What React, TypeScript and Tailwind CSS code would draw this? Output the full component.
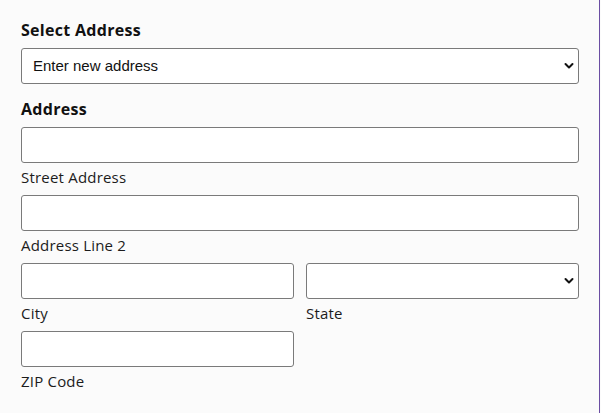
import { useState } from 'react'

const labelFont = { fontFamily: '"Open Sans", "Noto Sans", "DejaVu Sans", sans-serif' }

function Chevron() {
  return (
    <svg
      className="pointer-events-none absolute right-[5px] top-1/2 -translate-y-1/2"
      width="10"
      height="7"
      viewBox="0 0 10 7"
      fill="none"
    >
      <path d="M1.5 1.5 L5 5 L8.5 1.5" stroke="#111" strokeWidth="2" strokeLinecap="round" strokeLinejoin="round" />
    </svg>
  )
}

function SelectBox({ value, options }: { value: string; options: string[] }) {
  const [current, setCurrent] = useState(value)
  return (
    <div className="relative">
      <select
        value={current}
        onChange={(e) => setCurrent(e.target.value)}
        className="block h-[36px] w-full appearance-none rounded-[3px] border border-[#7a7a7a] bg-white pl-[11px] pr-8 text-[15px] text-[#111] outline-none"
        style={{ fontFamily: '"Liberation Sans", Arial, sans-serif' }}
      >
        {options.map((o) => (
          <option key={o} value={o}>
            {o}
          </option>
        ))}
      </select>
      <Chevron />
    </div>
  )
}

function Field({ label, children }: { label: string; children: React.ReactNode }) {
  return (
    <div className="mb-2">
      {children}
      <div className="mt-1 text-[15px] leading-[20px] tracking-[0.2px] text-[#1c1c1c]" style={labelFont}>
        {label}
      </div>
    </div>
  )
}

function TextBox() {
  return (
    <input
      type="text"
      className="block h-[36px] w-full rounded-[3px] border border-[#7a7a7a] bg-white px-2 text-[15px] outline-none"
    />
  )
}

export default function App() {
  return (
    <div className="flex min-h-[413px] bg-[#fbfbfb]">
      <div className="w-[600px] border-r border-[#6b4ea3] pl-[21px] pr-[20px] pt-[19px]">
        <h2 className="mb-[7px] text-[16px] font-bold leading-[22px] tracking-[0.3px] text-[#111]" style={labelFont}>
          Select Address
        </h2>
        <SelectBox value="Enter new address" options={['Enter new address']} />

        <h2 className="mb-[7px] mt-[14px] text-[16px] font-bold leading-[22px] tracking-[0.3px] text-[#111]" style={labelFont}>
          Address
        </h2>
        <Field label="Street Address">
          <TextBox />
        </Field>
        <Field label="Address Line 2">
          <TextBox />
        </Field>
        <div className="grid grid-cols-2 gap-x-3">
          <Field label="City">
            <TextBox />
          </Field>
          <Field label="State">
            <SelectBox value="" options={['']} />
          </Field>
        </div>
        <div className="grid grid-cols-2 gap-x-3">
          <Field label="ZIP Code">
            <TextBox />
          </Field>
        </div>
      </div>
    </div>
  )
}
